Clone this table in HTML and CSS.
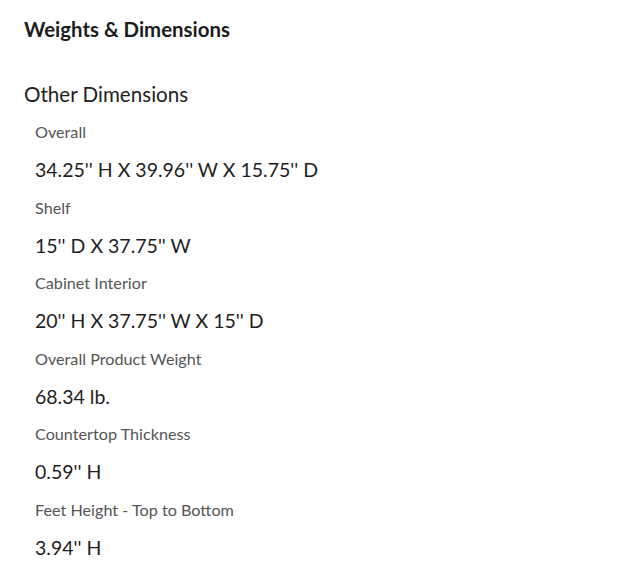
FILE: index.html
```html
<!DOCTYPE html>
<html lang="en">
<head>
<meta charset="utf-8">
<title>Weights &amp; Dimensions</title>
<link rel="stylesheet" href="styles.css">
</head>
<body>
<section class="specs">
  <h2 class="specs-title">Weights &amp; Dimensions</h2>
  <h3 class="specs-subtitle">Other Dimensions</h3>
  <dl class="specs-list">
    <dt class="spec-label">Overall</dt>
    <dd class="spec-value">34.25'' H X 39.96'' W X 15.75'' D</dd>
    <dt class="spec-label">Shelf</dt>
    <dd class="spec-value">15'' D X 37.75'' W</dd>
    <dt class="spec-label">Cabinet Interior</dt>
    <dd class="spec-value">20'' H X 37.75'' W X 15'' D</dd>
    <dt class="spec-label">Overall Product Weight</dt>
    <dd class="spec-value">68.34 lb.</dd>
    <dt class="spec-label">Countertop Thickness</dt>
    <dd class="spec-value">0.59'' H</dd>
    <dt class="spec-label">Feet Height - Top to Bottom</dt>
    <dd class="spec-value">3.94'' H</dd>
  </dl>
</section>
</body>
</html>
```

FILE: styles.css
```css
html, body {
  margin: 0;
  padding: 0;
  background: #ffffff;
}

body {
  font-family: Lato, "Noto Sans", "Liberation Sans", sans-serif;
  color: #222222;
}

.specs {
  padding: 17px 24px 0 24px;
}

.specs-title {
  margin: 0;
  font-size: 20.4px;
  line-height: 24px;
  font-weight: 700;
  color: #1c1c1c;
}

.specs-subtitle {
  margin: 41px 0 0 0;
  font-size: 20.6px;
  line-height: 24px;
  font-weight: 400;
  color: #222222;
}

.specs-list {
  margin: 16px 0 0 0;
  padding: 0 0 0 11px;
}

.spec-label {
  margin: 0;
  font-size: 16.2px;
  line-height: 20px;
  color: #555555;
}

.spec-value {
  margin: 16px 0 15.6px 0;
  font-size: 19.5px;
  line-height: 24px;
  color: #1e1e1e;
}
```
